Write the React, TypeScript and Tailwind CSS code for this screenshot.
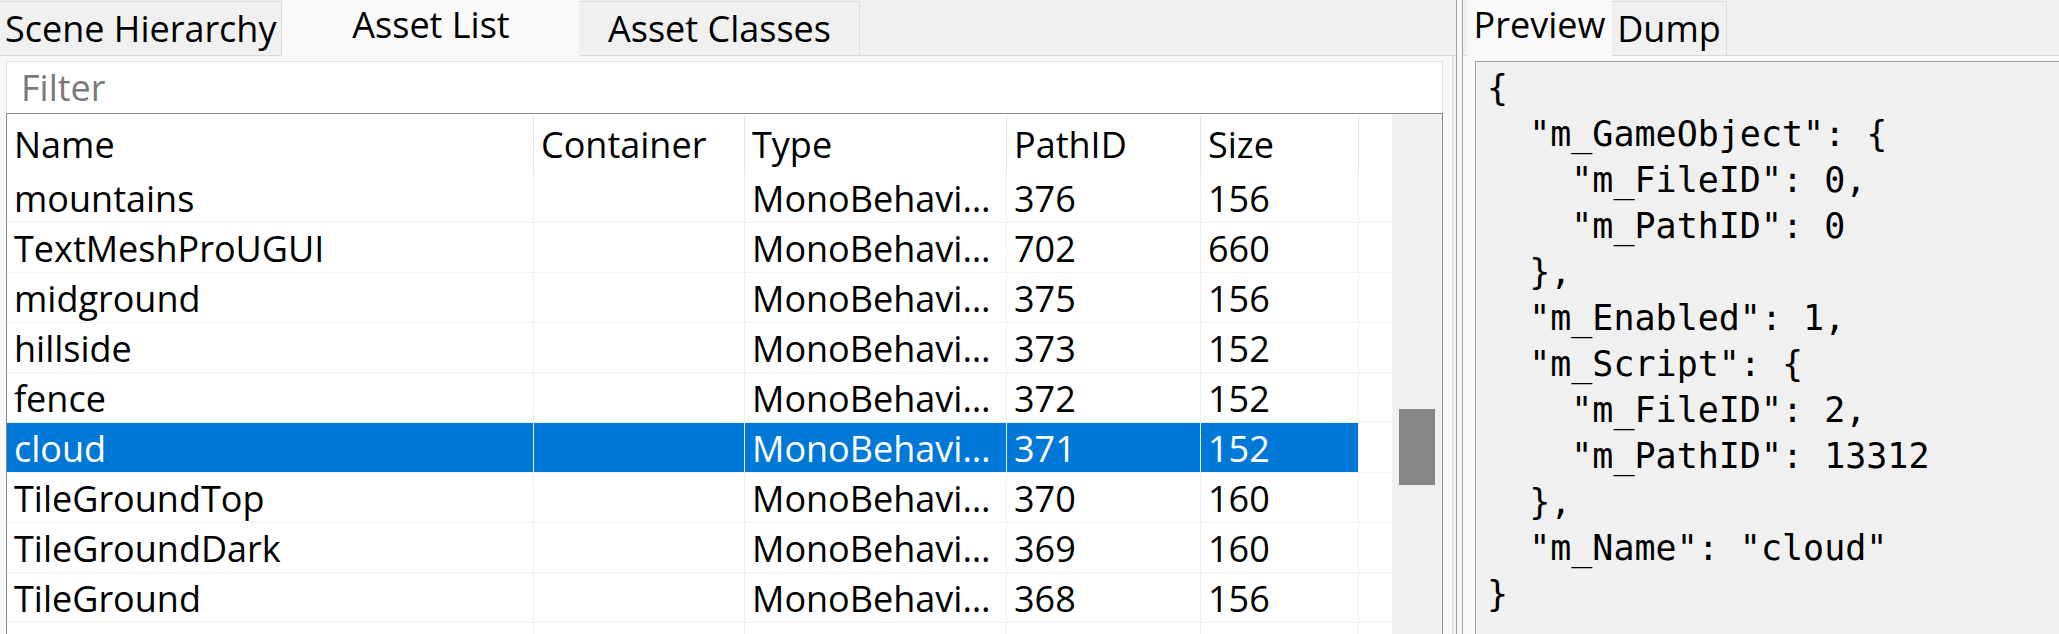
import React from 'react';

const rows = [
	{ name: 'mountains', pathId: 376, size: 156 },
	{ name: 'TextMeshProUGUI', pathId: 702, size: 660 },
	{ name: 'midground', pathId: 375, size: 156 },
	{ name: 'hillside', pathId: 373, size: 152 },
	{ name: 'fence', pathId: 372, size: 152 },
	{ name: 'cloud', pathId: 371, size: 152, selected: true },
	{ name: 'TileGroundTop', pathId: 370, size: 160 },
	{ name: 'TileGroundDark', pathId: 369, size: 160 },
	{ name: 'TileGround', pathId: 368, size: 156 },
];

const dump = `{
  "m_GameObject": {
    "m_FileID": 0,
    "m_PathID": 0
  },
  "m_Enabled": 1,
  "m_Script": {
    "m_FileID": 2,
    "m_PathID": 13312
  },
  "m_Name": "cloud"
}`;

const cols = 'grid grid-cols-[527px_211px_262px_194px_158px_1fr]';

const Tab = ({ label, active, width }: { label: string; active?: boolean; width: string }) =>
	active ? (
		<div className={`${width} h-[56px] -mb-px bg-[#f9f9f9] flex items-center justify-center pb-[6px] leading-[40px] whitespace-nowrap shrink-0`}>
			{label}
		</div>
	) : (
		<div className={`${width} h-[54px] bg-[#f0f0f0] border-t border-r border-[#dcdcdc] flex items-center justify-center leading-[40px] whitespace-nowrap shrink-0`}>
			{label}
		</div>
	);

const Row = ({ name, pathId, size, selected }: { name: string; pathId?: number; size?: number; selected?: boolean }) => {
	const cell = `h-[49px] flex items-center pl-[7px] pt-[3px] border-r border-[#f0f0f0] overflow-hidden whitespace-nowrap ${
		selected ? 'bg-[#0078d7] text-white' : ''
	}`;
	return (
		<div className={`${cols} border-b border-[#f0f0f0]`}>
			<div className={cell}>{name}</div>
			<div className={cell}></div>
			<div className={cell}>{name ? 'MonoBehavi…' : ''}</div>
			<div className={cell}>{pathId}</div>
			<div className={cell}>{size}</div>
			<div className="h-[49px]"></div>
		</div>
	);
};

export default function App() {
	return (
		<div className="flex w-[2059px] h-[634px] overflow-hidden bg-[#f0f0f0] text-black text-[36px] font-['Open_Sans',sans-serif]">
			{/* asset list side */}
			<div className="w-[1456px] flex flex-col shrink-0">
				<div className="h-[56px] flex items-end border-b border-[#dadada]">
					<div className="h-[54px] px-[5px] bg-[#f0f0f0] border-t border-r border-[#dcdcdc] flex items-center leading-[40px] whitespace-nowrap shrink-0">
						Scene Hierarchy
					</div>
					<Tab label="Asset List" width="w-[297px]" active />
					<Tab label="Asset Classes" width="w-[281px]" />
				</div>
				<div className="flex-1 min-h-0 flex">
					<div className="w-[1453px] bg-[#f9f9f9] border-r border-[#dcdcdc] pl-[6px] pr-[9px] pt-[5px] flex flex-col">
						<div className="h-[52px] bg-white border border-b-0 border-[#e3e3e3] flex items-center pl-[14px] text-[#7a7a7a]">
							Filter
						</div>
						<div className="flex-1 min-h-0 flex bg-white border-l border-t border-r border-[#8a8a8a] overflow-hidden">
							<div className="flex-1 flex flex-col">
								<div className={`${cols} h-[59px]`}>
									{['Name', 'Container', 'Type', 'PathID', 'Size'].map((h) => (
										<div key={h} className="mt-[2px] h-[57px] flex items-center pl-[7px] border-r border-[#e5e5e5]">
											{h}
										</div>
									))}
									<div></div>
								</div>
								{rows.map((r) => (
									<Row key={r.name} {...r} />
								))}
								<Row name="" />
							</div>
							<div className="w-[50px] bg-[#f0f0f0] pt-[295px] px-[7px]">
								<div className="h-[76px] bg-[#868686]"></div>
							</div>
						</div>
					</div>
					<div className="flex-1 bg-[#f0f0f0]"></div>
				</div>
			</div>

			{/* splitter */}
			<div className="w-[7px] shrink-0 border-l border-r border-[#a0a0a0] bg-[#f7f7f7]"></div>

			{/* dump side */}
			<div className="flex-1 flex flex-col">
				<div className="h-[56px] flex items-end border-b border-[#dadada] pl-[4px]">
					<Tab label="Preview" width="w-[145px]" active />
					<Tab label="Dump" width="w-[115px]" />
				</div>
				<div className="flex-1 min-h-0 bg-[#f9f9f9] pl-[12px] pt-[5px] flex">
					<pre className="flex-1 bg-[#f0f0f0] border-l border-t border-[#a0a0a0] pl-[11px] pt-[3px] text-[35px] leading-[46px] font-['DejaVu_Sans_Mono',monospace] whitespace-pre">
						{dump}
					</pre>
				</div>
			</div>
		</div>
	);
}
